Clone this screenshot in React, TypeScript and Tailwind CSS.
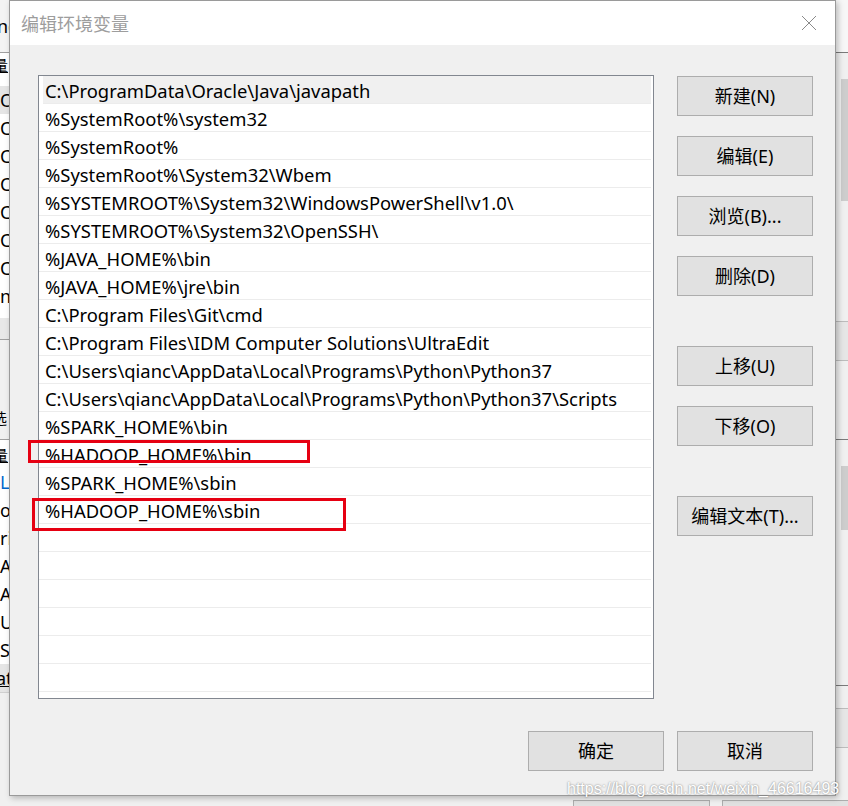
import React from 'react';

const paths: string[] = [
  'C:\\ProgramData\\Oracle\\Java\\javapath',
  '%SystemRoot%\\system32',
  '%SystemRoot%',
  '%SystemRoot%\\System32\\Wbem',
  '%SYSTEMROOT%\\System32\\WindowsPowerShell\\v1.0\\',
  '%SYSTEMROOT%\\System32\\OpenSSH\\',
  '%JAVA_HOME%\\bin',
  '%JAVA_HOME%\\jre\\bin',
  'C:\\Program Files\\Git\\cmd',
  'C:\\Program Files\\IDM Computer Solutions\\UltraEdit',
  'C:\\Users\\qianc\\AppData\\Local\\Programs\\Python\\Python37',
  'C:\\Users\\qianc\\AppData\\Local\\Programs\\Python\\Python37\\Scripts',
  '%SPARK_HOME%\\bin',
  '%HADOOP_HOME%\\bin',
  '%SPARK_HOME%\\sbin',
  '%HADOOP_HOME%\\sbin',
];

const font = "font-['Noto_Sans','Noto_Sans_CJK_SC',sans-serif]";

const Btn: React.FC<{ label: string; className?: string }> = ({ label, className = '' }) => (
  <button
    className={`w-[136px] h-[40px] bg-[#e1e1e1] border border-[#adadad] text-[18px] text-black flex items-center justify-center ${className}`}
  >
    {label}
  </button>
);

// 背后窗口左侧露出的残片 (一行 28px)
const topBits = ['O', 'C', 'C', 'C', 'C', 'C', 'C', 'n'];
const lowBits = ['LA', 'or', 'ri', 'A', 'AV', 'U', 'S'];

const StripRow: React.FC<{ t: string; className?: string }> = ({ t, className = '' }) => (
  <div className={`h-[28px] shrink-0 text-[18px] leading-[28px] whitespace-nowrap ${className}`}>{t}</div>
);

export default function App() {
  const emptyRows = Array.from({ length: 6 });

  return (
    <div className={`relative w-[848px] h-[806px] overflow-hidden bg-[#f0f0f0] ${font}`}>
      {/* background window: left strip */}
      <div className="absolute left-0 top-0 w-[10px] h-[806px] overflow-hidden bg-white flex flex-col">
        <div className="h-[53px] shrink-0 bg-[#f3f3f3] border-b border-[#a0a0a0] text-[18px] leading-[52px] -ml-[3px]">nc</div>
        <div className="h-[25px] shrink-0 text-[15px] leading-[25px] underline -ml-[7px]">量</div>
        <div className="h-[8px] shrink-0" />
        {topBits.map((t, i) => (
          <StripRow key={i} t={t} className={i === 0 ? 'bg-[#e5e5e5]' : ''} />
        ))}
        <div className="h-[8px] shrink-0" />
        <div className="h-[22px] shrink-0 bg-[#e8e8e8] border-b border-[#a0a0a0]" />
        <div className="h-[100px] shrink-0 bg-[#f0f0f0] border-b border-[#a0a0a0] flex items-end pb-[10px]">
          <span className="text-[15px] -ml-[8px]">选</span>
        </div>
        <div className="h-[28px] shrink-0 text-[15px] leading-[30px] underline -ml-[7px]">量</div>
        {lowBits.map((t, i) => (
          <StripRow key={i} t={t} className={i === 0 ? 'text-[#0066cc]' : ''} />
        ))}
        <StripRow t="at" className="bg-[#e5e5e5] underline -ml-[4px]" />
        <div className="flex-1 bg-[#f0f0f0] border-t border-[#d0d0d0]" />
      </div>

      {/* background window: right strip */}
      <div className="absolute left-[835px] top-0 w-[13px] h-[806px] bg-[#f0f0f0] flex flex-col">
        <div className="h-[53px] shrink-0 bg-[#f7f7f7] border-b border-[#7a7a7a]" />
        <div className="h-[268px] shrink-0 flex pl-[6px] pt-[26px]">
          <div className="w-[7px] h-[122px] bg-[#cdcdcd]" />
        </div>
        <div className="h-[40px] shrink-0 bg-[#e6e6e6] border-y border-[#bcbcbc]" />
        <div className="h-[79px] shrink-0 border-b border-[#7a7a7a]" />
        <div className="h-[245px] shrink-0 flex pl-[6px] pt-[26px]">
          <div className="w-[7px] h-[64px] bg-[#cdcdcd]" />
        </div>
        <div className="h-[1px] shrink-0 bg-[#7a7a7a]" />
        <div className="h-[22px] shrink-0" />
        <div className="h-[40px] shrink-0 bg-[#e6e6e6] border-y border-[#bcbcbc]" />
      </div>

      {/* background window: bottom buttons */}
      <div className="absolute left-[573px] top-[800px] flex gap-[12px]">
        <div className="w-[137px] h-[20px] bg-[#e1e1e1] border border-[#adadad]" />
        <div className="w-[137px] h-[20px] bg-[#e1e1e1] border border-[#adadad]" />
      </div>

      {/* dialog */}
      <div className="absolute left-[9px] top-0 w-[827px] h-[796px] flex flex-col bg-[#f0f0f0] border border-[#9a9a9a] shadow-[2px_2px_6px_rgba(0,0,0,0.25)]">
        <div className="h-[44px] bg-white flex items-center justify-between pl-[11px] pr-[16px] shrink-0">
          <span className="text-[18px] text-[#9d9d9d] font-['Noto_Sans_CJK_SC',sans-serif]">编辑环境变量</span>
          <svg width="16" height="16" viewBox="0 0 16 16" className="mr-[2px]">
            <path d="M1 1L15 15M15 1L1 15" stroke="#8a8a8a" strokeWidth="1" fill="none" />
          </svg>
        </div>

        <div className="flex-1 flex flex-col pl-[28px] pt-[30px]">
          <div className="flex gap-[23px]">
            <div className="w-[616px] h-[624px] bg-white border border-[#828790] overflow-hidden">
              {paths.map((p, i) => (
                <div
                  key={p}
                  className={`h-[28px] border-b border-[#ececec] text-[18.4px] leading-[27px] pt-[1px] whitespace-nowrap text-black mr-[2px] ${
                    i === 0 ? 'bg-[#f0f0f0] ml-[4px] pl-[2px]' : 'pl-[6px]'
                  }`}
                >
                  {p}
                </div>
              ))}
              {emptyRows.map((_, i) => (
                <div key={i} className="h-[28px] border-b border-[#ececec] mr-[2px]" />
              ))}
            </div>

            <div className="flex flex-col pt-[1px]">
              <Btn label="新建(N)" />
              <Btn label="编辑(E)" className="mt-[20px]" />
              <Btn label="浏览(B)..." className="mt-[20px]" />
              <Btn label="删除(D)" className="mt-[20px]" />
              <Btn label="上移(U)" className="mt-[50px]" />
              <Btn label="下移(O)" className="mt-[20px]" />
              <Btn label="编辑文本(T)..." className="mt-[50px]" />
            </div>
          </div>

          <div className="flex justify-end gap-[13px] pr-[22px] mt-[32px]">
            <Btn label="确定" />
            <Btn label="取消" />
          </div>
        </div>
      </div>

      {/* red annotation boxes */}
      <div className="absolute left-[28px] top-[440px] w-[282px] h-[23px] border-[3px] border-[#e60012]" />
      <div className="absolute left-[32px] top-[498px] w-[314px] h-[33px] border-[3px] border-[#e60012]" />

      {/* watermark */}
      <div className="absolute left-[567px] top-[777px] text-[16px] text-white font-['Liberation_Sans',sans-serif] [text-shadow:0_0_2px_rgba(0,0,0,0.55)] whitespace-nowrap">
        https://blog.csdn.net/weixin_46616493
      </div>
    </div>
  );
}
